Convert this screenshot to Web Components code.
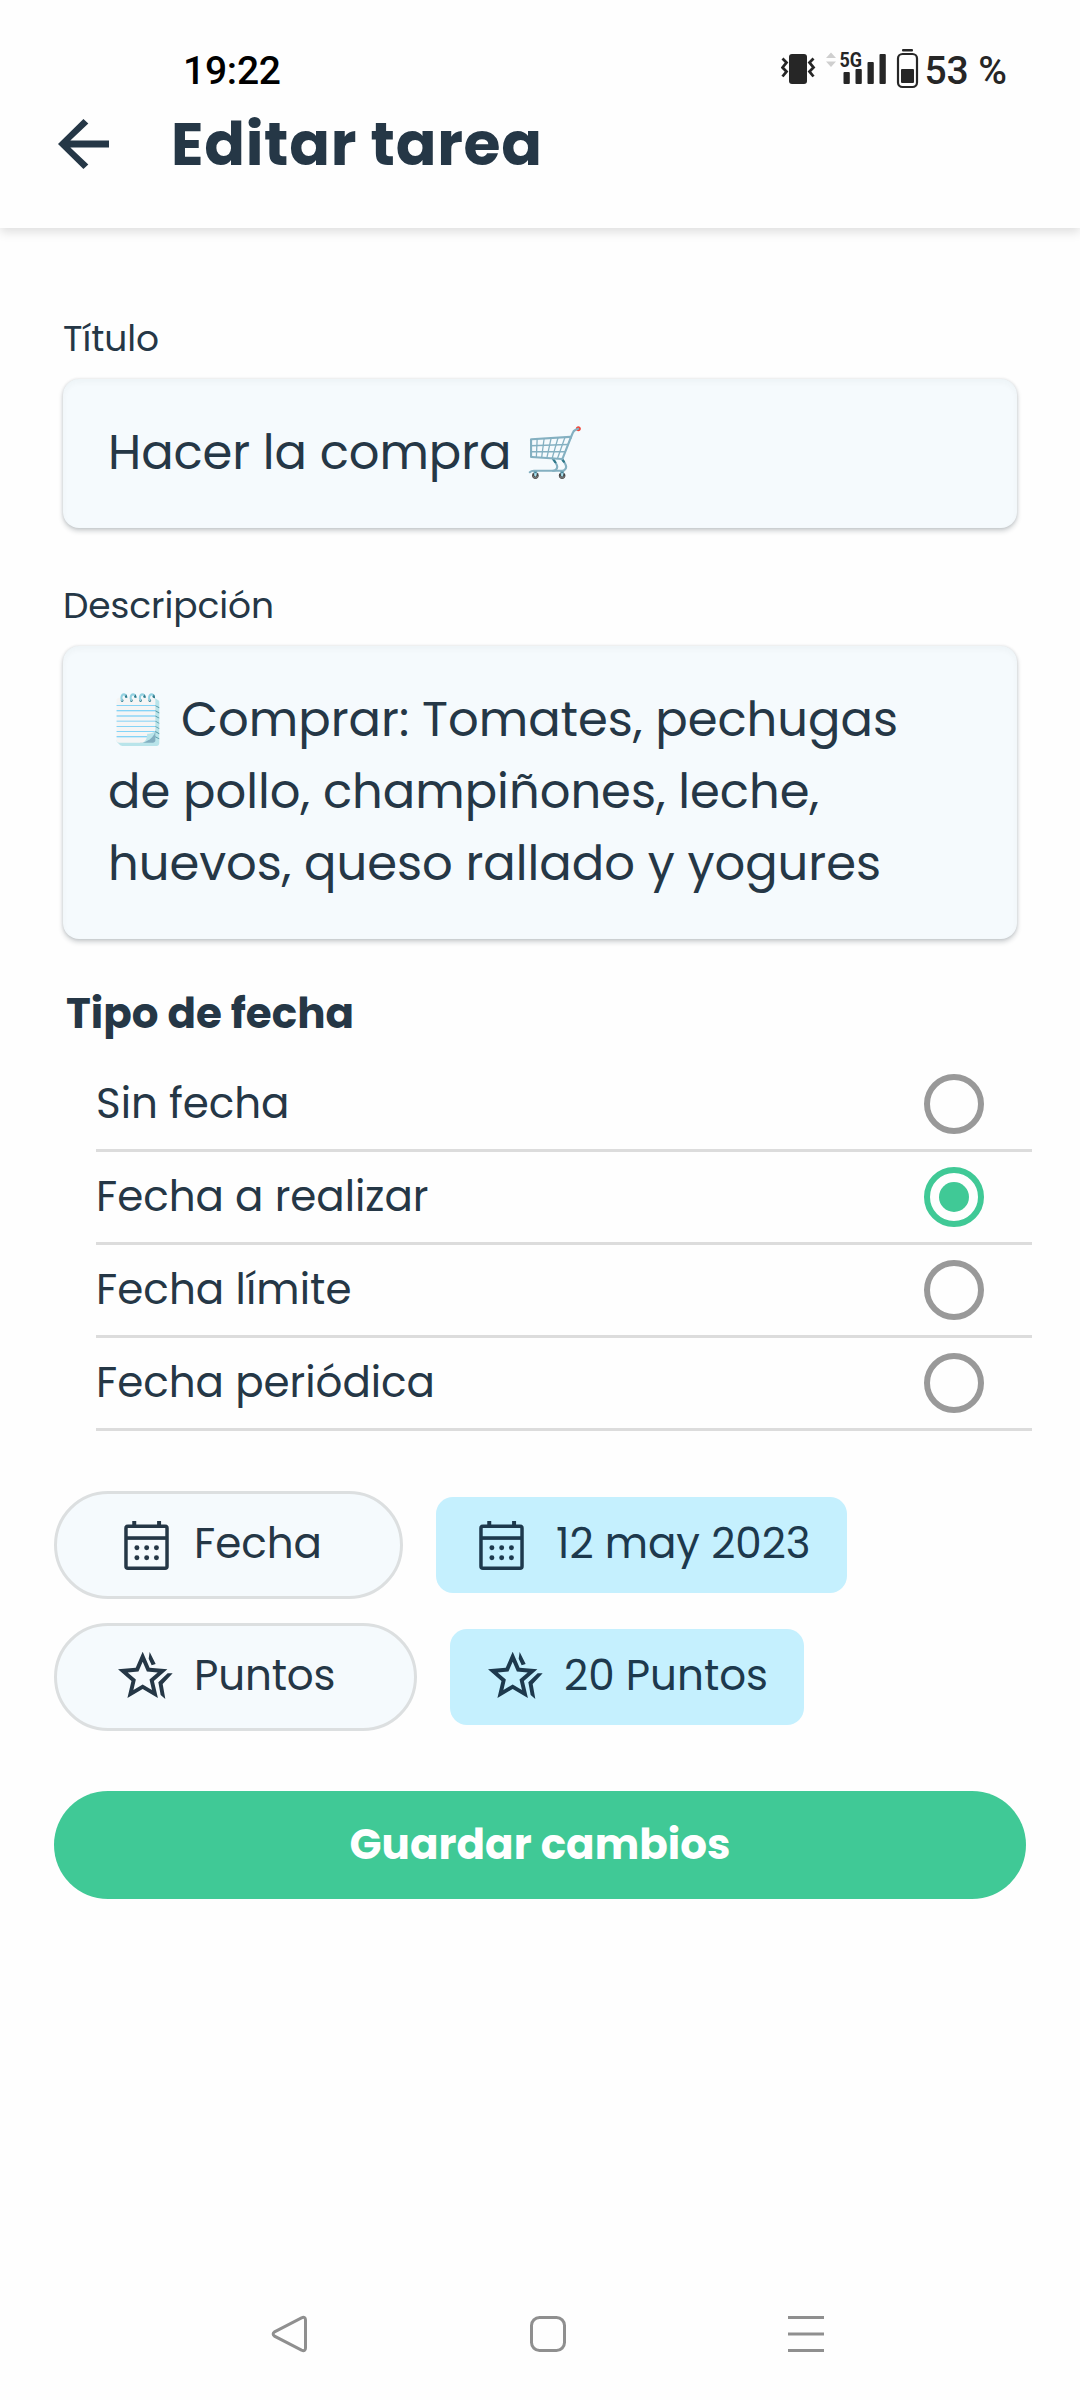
<!DOCTYPE html>
<html lang="es">
<head>
<meta charset="utf-8">
<title>Editar tarea</title>
<style>
html,body{margin:0;background:#fefefe}
body{width:1080px;height:2400px;overflow:hidden;font-family:Poppins,Inter,"Open Sans",sans-serif;color:#253746}
</style>
</head>
<body>
<edit-task-screen></edit-task-screen>
<script>
const define = (name, html, setup) => {
  const tpl = document.createElement('template');
  tpl.innerHTML = html;
  customElements.define(name, class extends HTMLElement {
    connectedCallback() {
      if (this.shadowRoot) return;
      this.attachShadow({ mode: 'open' }).append(tpl.content.cloneNode(true));
      if (setup) setup(this, this.shadowRoot);
    }
  });
};

define('edit-task-screen', `
<style>
:host{display:flex;flex-direction:column;width:1080px;height:2400px}
main{display:flex;flex-direction:column;flex:1}
.fields{display:flex;flex-direction:column;padding:88px 63px 0}
.second{margin-top:55px}
.h{margin:54px 0 0 66px;height:42px}
.list{display:flex;flex-direction:column;margin:24px 48px 0 96px}
.chips{display:flex;flex-direction:column;gap:24px;margin:60px 0 0 54px}
.row{display:flex;align-items:center;gap:33px}
save-button{margin:60px 54px 0}
</style>
<app-header></app-header>
<main>
  <div class="fields">
    <text-field tall="149.5"><fit-text slot="label" size="36" w="96">Título</fit-text>
      <fit-text size="48" w="403.5">Hacer la compra</fit-text><emoji-glyph style="margin-left:14px">🛒</emoji-glyph></text-field>
    <text-field class="second" tall="293.5"><fit-text slot="label" size="36" w="211">Descripción</fit-text>
      <emoji-glyph style="margin-right:13px">🗒️</emoji-glyph><fit-text size="48" w="717">Comprar: Tomates, pechugas</fit-text>
      <fit-text size="48" w="711">de pollo, champiñones, leche,</fit-text>
      <fit-text size="48" w="773">huevos, queso rallado y yogures</fit-text></text-field>
  </div>
  <fit-text class="h" size="42" w="288" bold>Tipo de fecha</fit-text>
  <div class="list">
    <radio-row><fit-text size="42" w="193.5">Sin fecha</fit-text></radio-row>
    <radio-row checked><fit-text size="42" w="332.5">Fecha a realizar</fit-text></radio-row>
    <radio-row><fit-text size="42" w="255.5">Fecha límite</fit-text></radio-row>
    <radio-row><fit-text size="42" w="339">Fecha periódica</fit-text></radio-row>
  </div>
  <div class="chips">
    <div class="row">
      <pill-chip style="width:349px"><calendar-icon style="margin:0 25px 0 67px"></calendar-icon><fit-text size="42" w="128">Fecha</fit-text></pill-chip>
      <pill-chip solid style="width:411px"><calendar-icon style="margin:0 32px 0 43px"></calendar-icon><fit-text size="42" w="254.5">12 may 2023</fit-text></pill-chip>
    </div>
    <div class="row">
      <pill-chip style="width:363px"><star-icon style="margin:0 21px 0 61px"></star-icon><fit-text size="42" w="141.5">Puntos</fit-text></pill-chip>
      <pill-chip solid style="width:354px"><star-icon style="margin:0 21px 0 38px"></star-icon><fit-text size="42" w="204">20 Puntos</fit-text></pill-chip>
    </div>
  </div>
  <save-button><fit-text size="42" w="381" bold>Guardar cambios</fit-text></save-button>
</main>
<nav-bar></nav-bar>`);

define('app-header', `
<style>
:host{display:flex;flex-direction:column;height:228px;background:#fefefe;box-shadow:0 4px 10px rgba(0,0,0,.13);box-sizing:border-box;padding-top:48px}
.bar{display:flex;align-items:center;height:104px;padding-left:57.5px}
.arrow{width:51.5px;height:50px;margin-right:62px}
</style>
<status-bar></status-bar>
<div class="bar">
  <svg class="arrow" viewBox="4 4 16 16" preserveAspectRatio="none" fill="#253746"><path d="M20 10.900H7.830l5.590-5.450L11.900 4 4 12l7.900 8 1.520-1.450L7.830 13.100H20z"/></svg>
  <fit-text size="60" w="371" bold>Editar tarea</fit-text>
</div>`);

define('status-bar', `
<style>
:host{display:flex;align-items:center;height:44px;padding:0 73px 0 183px;font-family:Roboto,sans-serif}
.time{flex:1;display:flex}
svg{display:block}
fit-text{color:#262626;padding-top:2px;height:44px}
.time fit-text{color:#000}
</style>
<span class="time"><fit-text size="39" w="98" medium>19:22</fit-text></span>
<svg width="144" height="44" viewBox="781 48 144 44" fill="#262626">
  <rect x="789" y="54" width="18" height="30" rx="3"/>
  <path d="M782.500 58.500l4 4-4 5 4 4-4 5M813.500 58.500l-4 4 4 5-4 4 4 5" fill="none" stroke="#262626" stroke-width="2.800"/>
  <path d="M831 52.500l5 5.500h-10zM831 67l5-5.500h-10z" fill="#cfcfcf"/>
  <text x="839.500" y="67" font-size="21" font-weight="700" textLength="22.500" lengthAdjust="spacingAndGlyphs" font-family="Roboto,sans-serif">5G</text>
  <rect x="843.500" y="72" width="6.300" height="12" rx="1"/><rect x="855.500" y="69" width="6.300" height="15" rx="1"/><rect x="867.500" y="62" width="6.300" height="22" rx="1"/><rect x="879.500" y="54" width="6.300" height="30" rx="1"/>
  <rect x="898" y="54" width="19" height="33" rx="4.500" fill="none" stroke="#262626" stroke-width="2.200"/>
  <rect x="902" y="49" width="11" height="2.600" rx="1"/><rect x="901" y="69" width="13" height="14" rx="1"/>
</svg>
<fit-text size="39" w="82.5" medium>53 %</fit-text>`);

define('text-field', `
<style>
:host{display:flex;flex-direction:column}
.label{display:flex;align-items:center;box-sizing:border-box;height:44px;padding-top:2px;margin-bottom:18.500px}
.box{box-sizing:border-box;display:flex;flex-wrap:wrap;align-content:center;align-items:center;padding:0 45px;background:#f5fafd;border-radius:16px;box-shadow:0 3px 5px rgba(30,45,55,.22),0 0 3px rgba(30,45,55,.14),inset 0 3px 6px rgba(30,45,55,.035)}
</style>
<div class="label"><slot name="label"></slot></div>
<div class="box"><slot></slot></div>`, (el, root) => {
  root.querySelector('.box').style.height = el.getAttribute('tall') + 'px';
});

define('emoji-glyph', `
<style>:host{display:flex;align-items:center;justify-content:center;box-sizing:border-box;width:60px;height:72px;padding-bottom:1px;font-family:"Noto Color Emoji",sans-serif;font-size:48px;line-height:71px}</style><slot></slot>`);

define('radio-row', `
<style>
:host{display:flex;align-items:center;justify-content:space-between;height:90px;border-bottom:3px solid #dcdcdc;padding:0 48px 0 0}
i{box-sizing:border-box;width:60px;height:60px;border:6px solid #999;border-radius:50%;display:flex;align-items:center;justify-content:center}
:host([checked]) i{border-color:#40c996}
:host([checked]) i::after{content:"";width:30px;height:30px;border-radius:50%;background:#40c996}
</style>
<slot></slot><i></i>`);

define('pill-chip', `
<style>
:host{box-sizing:border-box;display:flex;align-items:center;height:108px;border:3px solid #dcdfe0;border-radius:54px;background:#f5fafd}
:host([solid]){height:96px;border:0;border-radius:17px;background:#c5f0fe;color:#1d394d}
::slotted(fit-text){margin-bottom:2px}
</style>
<slot></slot>`);

define('calendar-icon', `
<style>:host{display:block;width:45px;height:49px}svg{display:block}</style>
<svg width="45" height="49" viewBox="252 152 134 148" fill="currentColor">
  <rect x="257" y="168" width="124" height="126.500" rx="6" fill="none" stroke="currentColor" stroke-width="10.500"/>
  <rect x="256" y="198" width="126" height="11"/><rect x="276" y="152" width="12" height="13"/><rect x="351" y="152" width="12" height="13"/>
  <circle cx="290" cy="233" r="7.500"/><circle cx="319.500" cy="233" r="7.500"/><circle cx="349" cy="233" r="7.500"/>
  <circle cx="290" cy="263" r="7.500"/><circle cx="319.500" cy="263" r="7.500"/><circle cx="349" cy="263" r="7.500"/>
</svg>`);

define('star-icon', `
<style>:host{display:block;width:55px;height:50px}svg{display:block}</style>
<svg width="55" height="48" viewBox="235 549 165 144" fill="currentColor">
  <path transform="translate(220.200 533.400) scale(7.400 7.320)" d="M22 9.240l-7.190-.62L12 2 9.190 8.630 2 9.240l5.460 4.730L5.820 21 12 17.270 18.180 21l-1.630-7.030L22 9.240zM12 15.400l-3.760 2.270 1-4.280-3.320-2.880 4.380-.38L12 6.100l1.710 4.040 4.380.38-3.320 2.880 1 4.280L12 15.400z"/>
  <path d="M330 549l18 36-12 4-9-20zM399 613h-15l-28 27 7 38 14 12-8-45z"/>
</svg>`);

define('save-button', `
<style>:host{display:flex;align-items:center;justify-content:center;height:108px;border-radius:54px;background:#40c996;color:#fff}</style>
<slot></slot>`);

define('nav-bar', `
<style>:host{display:flex;align-items:center;justify-content:space-between;height:60px;margin-bottom:36px;padding:0 256px 0 271px}svg{display:block}</style>
<svg width="37" height="38" fill="none" stroke="#8f8f8f" stroke-width="3"><path d="M3.500 16.800L30.500 2.800Q34.500 1.300 34.500 5v28q0 3.700-4 2.200L3.500 21.200Q.8 19 3.500 16.800z"/></svg>
<svg width="38" height="38" fill="none" stroke="#8f8f8f" stroke-width="3"><rect x="2.500" y="2.500" width="33" height="33" rx="8"/></svg>
<svg width="36" height="38" stroke="#8f8f8f" stroke-width="3"><path d="M0 2.500h36M0 19h36M0 35.500h36"/></svg>`);

/* A single line whose tracking is set so that it spans exactly w pixels. */
define('fit-text', `
<style>:host{display:flex;align-items:center;height:72px;white-space:pre;flex:none}span{display:block;line-height:1}</style>
<span><slot></slot></span>`, (el, root) => {
  const s = root.querySelector('span'), w = +el.getAttribute('w');
  s.style.fontSize = el.getAttribute('size') + 'px';
  s.style.fontWeight = el.hasAttribute('bold') ? 700 : el.hasAttribute('medium') ? 500 : 400;
  const n = el.textContent.length;
  s.style.letterSpacing = (w - s.getBoundingClientRect().width) / (n - 1) + 'px';
  el.style.width = w + 'px';
});
</script>
</body>
</html>
